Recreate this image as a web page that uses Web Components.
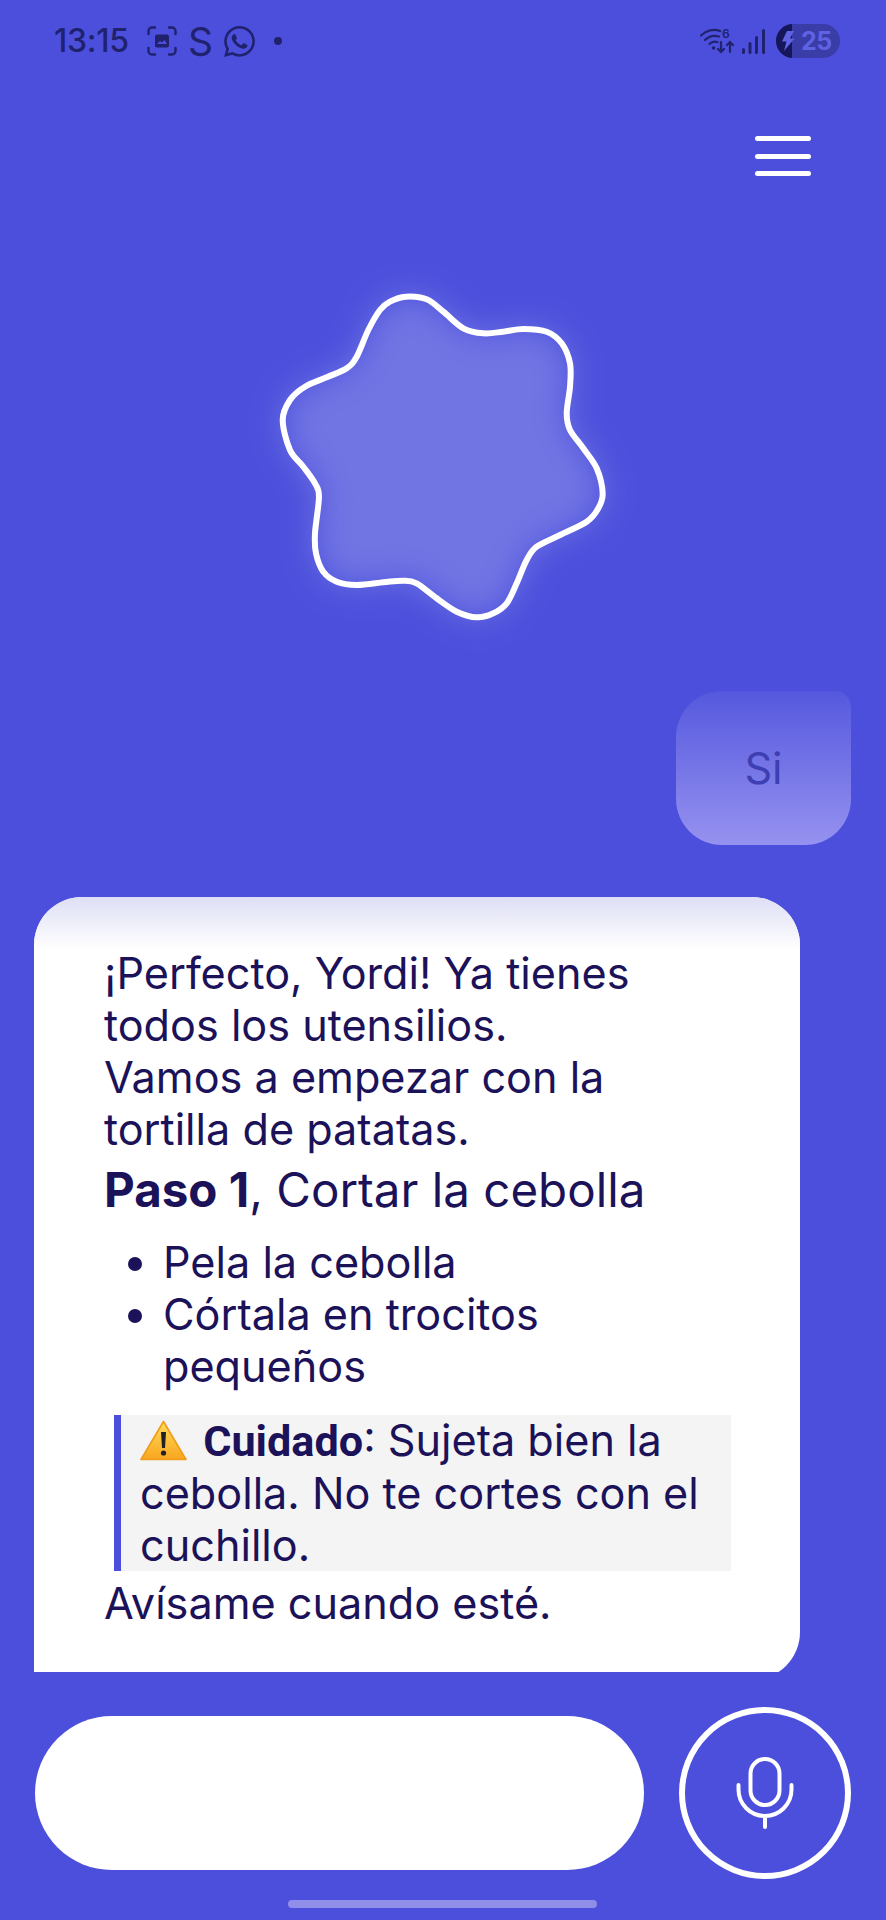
<!DOCTYPE html>
<html lang="es">
<head>
<meta charset="utf-8">
<title>Cocina</title>
<style>
  html, body { margin: 0; padding: 0; background: #4b4fdc; }
  body { font-family: Inter, "Noto Sans", sans-serif; }
  chat-app { width: 886px; height: 1920px; }
  warn-note strong { font-family: Roboto, Inter, sans-serif; }
</style>
</head>
<body>
<chat-app>
  <status-bar></status-bar>
  <menu-button></menu-button>
  <voice-blob></voice-blob>
  <user-bubble>Si</user-bubble>
  <chat-card>
    <p>¡Perfecto, Yordi! Ya tienes todos los utensilios.<br>Vamos a empezar con la tortilla de patatas.</p>
    <h3><strong>Paso 1</strong>, Cortar la cebolla</h3>
    <ul>
      <li>Pela la cebolla</li>
      <li>Córtala en trocitos pequeños</li>
    </ul>
    <warn-note><strong>Cuidado</strong>: Sujeta bien la cebolla. No te cortes con el cuchillo.</warn-note>
    <p>Avísame cuando esté.</p>
  </chat-card>
  <input-bar></input-bar>
  <home-indicator></home-indicator>
</chat-app>

<script>
// barra de estado del teléfono
class StatusBar extends HTMLElement {
  constructor() {
    super();
    this.attachShadow({ mode: 'open' });
    this.shadowRoot.innerHTML = `
      <style>
        :host {
          display: flex;
          align-items: center;
          height: 82px;
          padding: 0 46px 0 54px;
          color: #20226e;
          box-sizing: border-box;
        }
        .time { font: 500 32px/1 Inter, sans-serif; width: 78px; white-space: nowrap; letter-spacing: -.3px; }
        .shot { margin-left: 15px; }
        .s { font: 400 39px/1 Inter, sans-serif; margin-left: 11px; width: 24px; text-align: center; }
        .wa { margin-left: 12px; }
        .dot { width: 8px; height: 8px; border-radius: 50%; background: #20226e; margin-left: 19px; }
        .right { margin-left: auto; display: flex; align-items: center; }
        .signal { margin-left: 8px; }
        .battery {
          display: flex;
          align-items: center;
          width: 64px;
          height: 34px;
          margin-left: 11px;
          border-radius: 17px;
          overflow: hidden;
          background: #3a3ca8;
        }
        .bolt {
          width: 16px;
          height: 34px;
          background: #16175a;
          flex: none;
          position: relative;
        }
        .bolt svg { position: absolute; left: 5px; top: 7px; }
        .level { font: 700 25px/1 Inter, sans-serif; color: #5f63e2; margin-left: 9px; letter-spacing: -.5px; }
      </style>
      <span class="time">13:15</span>
      <svg class="shot" width="30" height="30" viewBox="0 0 30 30" fill="none" stroke="#20226e" stroke-width="2.4" stroke-linecap="round">
        <path d="M1.5 8V5a3.5 3.5 0 0 1 3.5-3.5h3M22 1.500h3A3.500 3.500 0 0 1 28.500 5v3M28.500 22v3a3.500 3.500 0 0 1-3.500 3.500h-3M8 28.500H5A3.500 3.500 0 0 1 1.500 25v-3"/>
        <rect x="8" y="8.500" width="14" height="13" rx="2" fill="#20226e" stroke="none"/>
        <path d="M10 18l3-3 2 1.500 2.500-2.500 2.500 4z" fill="#4b4fdc" stroke="none"/>
      </svg>
      <span class="s">S</span>
      <svg class="wa" width="31" height="31" viewBox="0 0 24 24" fill="#20226e">
        <path d="M17.472 14.382c-.297-.149-1.758-.867-2.03-.967-.273-.099-.471-.148-.67.15-.197.297-.767.966-.94 1.164-.173.199-.347.223-.644.075-.297-.15-1.255-.463-2.39-1.475-.883-.788-1.48-1.761-1.653-2.059-.173-.297-.018-.458.13-.606.134-.133.298-.347.446-.52.149-.174.198-.298.298-.497.099-.198.05-.371-.025-.52-.075-.149-.669-1.612-.916-2.207-.242-.579-.487-.5-.669-.51-.173-.008-.371-.01-.57-.01-.198 0-.52.074-.792.372-.272.297-1.04 1.016-1.04 2.479 0 1.462 1.065 2.875 1.213 3.074.149.198 2.096 3.2 5.077 4.487.709.306 1.262.489 1.694.625.712.227 1.36.195 1.871.118.571-.085 1.758-.719 2.006-1.413.248-.694.248-1.289.173-1.413-.074-.124-.272-.198-.57-.347m-5.421 7.403h-.004a9.87 9.87 0 01-5.031-1.378l-.361-.214-3.741.982.998-3.648-.235-.374a9.86 9.86 0 01-1.51-5.26c.001-5.45 4.436-9.884 9.888-9.884 2.64 0 5.122 1.03 6.988 2.898a9.825 9.825 0 012.893 6.994c-.003 5.45-4.437 9.884-9.885 9.884m8.413-18.297A11.815 11.815 0 0012.05 0C5.495 0 .16 5.335.157 11.892c0 2.096.547 4.142 1.588 5.945L.057 24l6.305-1.654a11.882 11.882 0 005.683 1.448h.005c6.554 0 11.89-5.335 11.893-11.893a11.821 11.821 0 00-3.48-8.413z"/>
      </svg>
      <span class="dot"></span>
      <div class="right">
        <svg width="34" height="26" viewBox="0 0 34 26" fill="none" stroke="#20226e" stroke-width="2.200" stroke-linecap="round">
          <path d="M1 7.500C6 2.500 14 .5 20 3M5 12c3.500-3.500 9-5 14-3.500M9.500 16c2-2 5-2.800 8-1.800"/>
          <circle cx="13.500" cy="20" r="1.800" fill="#20226e" stroke="none"/>
          <path d="M21 14v10M18 21l3 3 3-3M30 24V14M27 17l3-3 3 3"/>
          <text x="22" y="10" font-family="Inter, sans-serif" font-size="12" font-weight="600" fill="#20226e" stroke="none">6</text>
        </svg>
        <svg class="signal" width="23" height="25" viewBox="0 0 23 25" fill="#20226e">
          <rect x="0" y="19" width="3" height="6" rx="1.500"/>
          <rect x="6.500" y="13" width="3" height="12" rx="1.500"/>
          <rect x="13" y="7" width="3" height="18" rx="1.500"/>
          <rect x="20" y="0" width="3" height="25" rx="1.500"/>
        </svg>
        <div class="battery">
          <div class="bolt">
            <svg width="14" height="20" viewBox="0 0 14 20" fill="#5f63e2"><path d="M6 0h7L9 7.500h4.500L3 20l2.500-9.500H1z"/></svg>
          </div>
          <span class="level">25</span>
        </div>
      </div>
    `;
  }
}

// botón de menú (hamburguesa)
class MenuButton extends HTMLElement {
  constructor() {
    super();
    this.attachShadow({ mode: 'open' });
    this.shadowRoot.innerHTML = `
      <style>
        :host {
          display: flex;
          flex-direction: column;
          gap: 12.500px;
          align-items: flex-end;
          padding: 54px 75px 0 0;
          height: 44px;
        }
        span { display: block; width: 56px; height: 5px; border-radius: 2.500px; background: #fff; flex: none; }
      </style>
      <span></span><span></span><span></span>
    `;
  }
}

// forma orgánica con brillo detrás
class VoiceBlob extends HTMLElement {
  static get points() {
    // coordenadas tomadas alrededor de la forma, caja de 326
    return [[497,110],[560,118],[610,155],[670,205],[730,220],[790,215],[850,207],[920,215],[965,250],[990,310],[990,380],[980,460],[990,510],[1030,565],[1070,625],[1088,700],[1075,745],[1040,785],[960,825],[890,860],[860,900],[830,970],[800,1030],[760,1060],[710,1072],[650,1055],[590,1015],[530,970],[490,962],[430,967],[350,975],[290,965],[250,935],[228,880],[225,820],[237,710],[225,670],[190,620],[150,570],[128,480],[150,420],[195,380],[260,352],[320,325],[350,290],[385,210],[420,150],[450,125]]
      .map(([x, y]) => [(x - 120) / 3, (y - 102) / 3]);
  }

  static smoothPath(pts) {
    const n = pts.length;
    let d = `M${pts[0][0].toFixed(1)} ${pts[0][1].toFixed(1)}`;
    for (let i = 0; i < n; i++) {
      const p0 = pts[(i - 1 + n) % n], p1 = pts[i], p2 = pts[(i + 1) % n], p3 = pts[(i + 2) % n];
      const c1 = [p1[0] + (p2[0] - p0[0]) / 6, p1[1] + (p2[1] - p0[1]) / 6];
      const c2 = [p2[0] - (p3[0] - p1[0]) / 6, p2[1] - (p3[1] - p1[1]) / 6];
      d += `C${c1[0].toFixed(1)} ${c1[1].toFixed(1)} ${c2[0].toFixed(1)} ${c2[1].toFixed(1)} ${p2[0].toFixed(1)} ${p2[1].toFixed(1)}`;
    }
    return d + 'Z';
  }

  constructor() {
    super();
    this.attachShadow({ mode: 'open' });
    const d = VoiceBlob.smoothPath(VoiceBlob.points);
    this.shadowRoot.innerHTML = `
      <style>
        :host {
          display: flex;
          justify-content: center;
          margin: 114px 0 71px;
          height: 326px;
        }
        svg { overflow: visible; }
      </style>
      <svg width="326" height="326" viewBox="0 0 326 326">
        <defs>
          <filter id="soft" x="-30%" y="-30%" width="160%" height="160%">
            <feGaussianBlur stdDeviation="17"/>
          </filter>
        </defs>
        <path d="${d}" fill="#fff" fill-opacity=".21" filter="url(#soft)"/>
        <path d="${d}" fill="none" stroke="#fff" stroke-width="6" stroke-linejoin="round"/>
      </svg>
    `;
  }
}

// burbuja del usuario
class UserBubble extends HTMLElement {
  constructor() {
    super();
    this.attachShadow({ mode: 'open' });
    this.shadowRoot.innerHTML = `
      <style>
        :host {
          display: flex;
          align-items: center;
          justify-content: center;
          width: 175px;
          height: 154px;
          margin-left: 676px;
          border-radius: 46px 16px 46px 46px;
          background: linear-gradient(180deg, #5558de 0%, #9692f0 100%);
          color: #3d3fb2;
          font: 400 43.200px/52px Inter, sans-serif;
        }
      </style>
      <slot></slot>
    `;
  }
}

// tarjeta de respuesta, recortada por abajo como si hiciera scroll
class ChatCard extends HTMLElement {
  constructor() {
    super();
    this.attachShadow({ mode: 'open' });
    this.shadowRoot.innerHTML = `
      <style>
        :host {
          display: block;
          width: 766px;
          height: 775px;
          margin: 52px 0 35px 34px;
          overflow: hidden;
          color: #1b1259;
          font: 400 43.200px/51.840px Inter, sans-serif;
        }
        .card {
          position: relative;
          background: #fff;
          border-radius: 48px 48px 48px 0;
          padding: 51px 59px 50px 70px;
        }
        .card::before {
          content: '';
          position: absolute;
          left: 0;
          right: 0;
          top: 0;
          height: 53px;
          border-radius: 48px 48px 0 0;
          background: linear-gradient(180deg, #dedff5, #fff);
        }
        ::slotted(p) { margin: 7px 0 0; position: relative; }
        ::slotted(p:first-child) { margin-top: 0; }
        ::slotted(h3) { margin: 6px 0 0; font-size: 47.500px; line-height: 57px; font-weight: 400; }
        ::slotted(ul) { margin: 19px 0 22px; padding: 0 0 0 59px; }
      </style>
      <div class="card"><slot></slot></div>
    `;
  }
}

// aviso con borde lateral
class WarnNote extends HTMLElement {
  constructor() {
    super();
    this.attachShadow({ mode: 'open' });
    this.shadowRoot.innerHTML = `
      <style>
        :host {
          display: block;
          margin: 0 10px;
          padding: 0 10px 0 19px;
          border-left: 7px solid #4b4fdc;
          background: #f4f4f4;
        }
        svg { vertical-align: -5px; margin-right: 4px; }
      </style>
      <svg width="47" height="41" viewBox="0 0 47 41">
        <defs>
          <linearGradient id="tri" x1="0" y1="0" x2="0" y2="1">
            <stop offset="0" stop-color="#ffdc5a"/>
            <stop offset="1" stop-color="#f9a620"/>
          </linearGradient>
        </defs>
        <path d="M23.500 1.500 46 39.500H1z" fill="url(#tri)" stroke="#ee9c1c" stroke-width="1.600" stroke-linejoin="round"/>
        <path d="M21 12h5l-1 16h-3z" fill="#222"/>
        <circle cx="23.500" cy="33" r="2.600" fill="#222"/>
      </svg>
      <slot></slot>
    `;
  }
}

// botón de micrófono
class MicButton extends HTMLElement {
  constructor() {
    super();
    this.attachShadow({ mode: 'open' });
    this.shadowRoot.innerHTML = `
      <style>
        :host {
          display: flex;
          align-items: center;
          justify-content: center;
          width: 172px;
          height: 172px;
          box-sizing: border-box;
          border: 6px solid #fff;
          border-radius: 50%;
        }
      </style>
      <svg width="60" height="76" viewBox="0 0 60 76" fill="none" stroke="#fff" stroke-width="4" stroke-linecap="round">
        <rect x="15.500" y="4" width="29" height="46" rx="14.500"/>
        <path d="M3.500 30v4.500a26.500 26.500 0 0 0 53 0V30M30 61v11"/>
      </svg>
    `;
  }
}

// fila inferior: caja de texto y micrófono
class InputBar extends HTMLElement {
  constructor() {
    super();
    this.attachShadow({ mode: 'open' });
    this.shadowRoot.innerHTML = `
      <style>
        :host {
          display: flex;
          align-items: center;
          gap: 35px;
          padding-left: 35px;
        }
        .field { width: 609px; height: 154px; border-radius: 77px; background: #fff; }
      </style>
      <div class="field"></div>
      <mic-button></mic-button>
    `;
  }
}

class HomeIndicator extends HTMLElement {
  constructor() {
    super();
    this.attachShadow({ mode: 'open' });
    this.shadowRoot.innerHTML = `
      <style>
        :host {
          display: block;
          width: 309px;
          height: 8px;
          margin: 21px 0 0 288px;
          border-radius: 4px;
          background: #8f8fea;
        }
      </style>
    `;
  }
}

class ChatApp extends HTMLElement {
  constructor() {
    super();
    this.attachShadow({ mode: 'open' });
    this.shadowRoot.innerHTML = `
      <style>
        :host {
          display: block;
          background: #4b4fdc;
          overflow: hidden;
        }
      </style>
      <slot></slot>
    `;
  }
}

customElements.define('status-bar', StatusBar);
customElements.define('menu-button', MenuButton);
customElements.define('voice-blob', VoiceBlob);
customElements.define('user-bubble', UserBubble);
customElements.define('chat-card', ChatCard);
customElements.define('warn-note', WarnNote);
customElements.define('mic-button', MicButton);
customElements.define('input-bar', InputBar);
customElements.define('home-indicator', HomeIndicator);
customElements.define('chat-app', ChatApp);
</script>
</body>
</html>
